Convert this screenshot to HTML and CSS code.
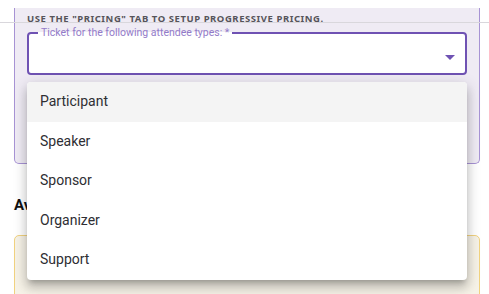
FILE: index.html
```html
<!DOCTYPE html>
<html>
<head>
    <title>Ticket attendee types</title>
    <link rel="stylesheet" href="styles.css">
</head>
<body>
    <div class="page">
        <div class="pricing-card">
            <p class="pricing-note">Use the "Pricing" tab to setup progressive pricing.</p>
            <fieldset class="select-field">
                <legend>Ticket for the following attendee types: *</legend>
                <div class="select-value"></div>
                <span class="select-arrow"></span>
            </fieldset>
        </div>

        <h3 class="section-title">Availability</h3>
        <div class="notice-card"></div>
    </div>

    <!-- tab bar edge that sits over the scrolled content -->
    <div class="tab-edge"></div>

    <ul class="menu">
        <li class="menu-item selected">Participant</li>
        <li class="menu-item">Speaker</li>
        <li class="menu-item">Sponsor</li>
        <li class="menu-item">Organizer</li>
        <li class="menu-item">Support</li>
    </ul>
</body>
</html>
```

FILE: styles.css
```css
body, html {
    margin: 0;
    padding: 0;
    height: 100%;
    background: #ffffff;
    font-family: Roboto, 'Noto Sans', sans-serif;
    overflow: hidden;
}

.page {
    padding: 8px 9px 0 14px;
}

.pricing-card {
    background: #efebf4;
    border: 1px solid #a793d4;
    border-top: none;
    border-radius: 0 0 5px 5px;
    padding: 5px 12px 0 12px;
    height: 150px;
}

.pricing-note {
    margin: 0;
    font-family: 'Noto Sans', sans-serif;
    font-size: 9.5px;
    font-weight: bold;
    letter-spacing: 0.55px;
    text-transform: uppercase;
    color: #56545a;
    line-height: 12px;
}

.select-field {
    position: relative;
    margin: 3px 0 0 0;
    padding: 0 12px;
    height: 47px;
    box-sizing: border-box;
    border: 2px solid #6f52b3;
    border-radius: 4px;
    background: #ffffff;
}

.select-field legend {
    font-size: 10.5px;
    color: #937bc9;
    padding: 0 3px;
    margin-left: -3px;
    line-height: 10px;
}

.select-arrow {
    position: absolute;
    right: 10px;
    top: 17px;
    width: 0;
    height: 0;
    border-left: 5px solid transparent;
    border-right: 5px solid transparent;
    border-top: 5px solid #6f52b3;
}

.section-title {
    margin: 31px 0 0 0;
    font-size: 15px;
    font-weight: bold;
    color: #111111;
    line-height: 20px;
}

.notice-card {
    margin-top: 20px;
    height: 80px;
    background: #f6f2e7;
    border: 1px solid #f1d27f;
    border-radius: 5px;
}

.tab-edge {
    position: absolute;
    top: 22px;
    left: 0;
    right: 0;
    height: 1px;
    background: #d9d7dc;
}

.menu {
    position: absolute;
    top: 82px;
    left: 27px;
    width: 440px;
    margin: 0;
    padding: 0;
    list-style: none;
    background: #ffffff;
    border-radius: 4px;
    box-shadow: 0 5px 5px -3px rgba(0, 0, 0, 0.2),
                0 8px 10px 1px rgba(0, 0, 0, 0.14),
                0 3px 14px 2px rgba(0, 0, 0, 0.12);
}

.menu-item {
    height: 39.5px;
    line-height: 39.5px;
    padding-left: 13px;
    font-size: 14px;
    color: #2e2e33;
}

.menu-item.selected {
    background: #f4f4f4;
    border-radius: 4px 4px 0 0;
}
```
